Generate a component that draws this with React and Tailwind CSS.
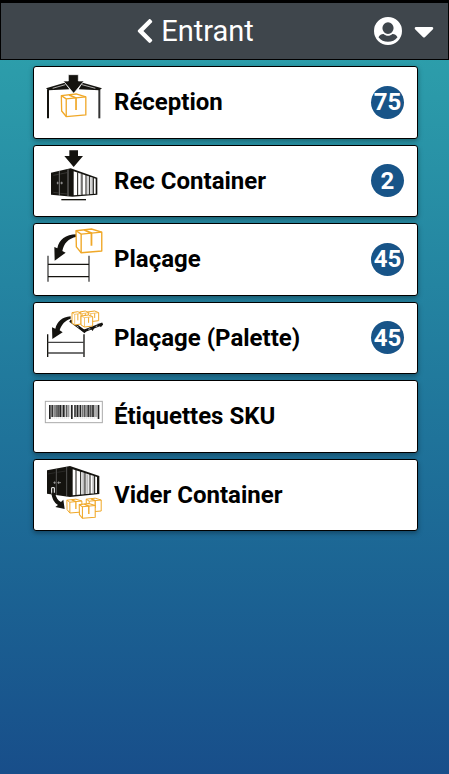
import React from "react";
import { FaChevronLeft, FaCaretDown } from "react-icons/fa";

const INK = "#14130f";
const GOLD = "#f0a828";

function UserIcon() {
    return (
        <svg viewBox="0 0 28 28" className="size-7" fill="currentColor" aria-hidden="true">
            <path
                fillRule="evenodd"
                d="M14 0a14 14 0 1 0 0 28a14 14 0 1 0 0-28Z M14 5.2a5.6 5.9 0 1 1 0 11.8a5.6 5.9 0 1 1 0-11.8Z M4.5 20.2C5.8 17.8 7.8 16.8 9.6 17C12 19.4 16 19.4 18.4 17C20.2 16.8 22.2 17.8 23.5 20.2C21.2 23.4 17.8 24.8 14 24.8C10.2 24.8 6.8 23.4 4.5 20.2Z"
            />
        </svg>
    );
}

function Box({ x, y, size = 1, width = 4 }) {
    return (
        <g transform={`translate(${x} ${y}) scale(${size})`} fill="#fff" stroke={GOLD} strokeWidth={width} strokeLinejoin="round">
            <path d="M1 6 L46 1 L76 10 L76 65 L16 70 L2 53 Z" />
            <path d="M1 6 L16 16 L76 10 M16 16 V70" fill="none" />
            <path d="M25 4 L46 13 V50" fill="none" strokeWidth={width * 1.3} />
        </g>
    );
}

// upright carton used for the small piles
function Carton({ x, y, w, h }) {
    return (
        <g transform={`translate(${x} ${y})`} fill="#fff" stroke={GOLD} strokeWidth="3" strokeLinejoin="round">
            <path d={`M0 3 L${w * 0.65} 0 L${w} 5 V${h - 3} L${w * 0.3} ${h} L0 ${h - 6} Z`} />
            <path d={`M0 3 L${w * 0.3} 8 L${w} 5 M${w * 0.3} 8 V${h}`} fill="none" strokeWidth="2" />
            <path d={`M${w * 0.65} 7 V${h * 0.65}`} fill="none" />
        </g>
    );
}

function ReceptionIcon() {
    return (
        <svg viewBox="36 15 192 210" className="h-[70px] w-16 shrink-0" aria-hidden="true">
            <path d="M54 169 V82" stroke={INK} strokeWidth="6" />
            <path d="M208 169 V82" stroke="#333" strokeWidth="6" />
            <path d="M48 79 L104 62 L118 82 L56 85 Z M216 79 L158 62 L146 82 L208 85 Z" fill={INK} />
            <path d="M68 79 L106 68 M196 79 L156 68" stroke="#fff" strokeWidth="2" />
            <Box x={93} y={95} size={0.98} />
            <path d="M115 38 H145 V57 H162 L131 94 L100 57 H115 Z" fill={INK} stroke="#fff" strokeWidth="2" />
        </svg>
    );
}

function Container() {
    return (
        <g>
            <path d="M63 91 L122 78 L202 106 V157 L127 163 L63 157 Z" fill={INK} />
            <path d="M131 87 L197 109 V154 L131 159 Z" fill="#fff" />
            <path d="M151 94 L155 95 V157 H151 Z M172 101 L176 102 V156 H172 Z M184 105 L189 107 V155 H184 Z" fill="#bbb" />
            <path d="M143 90 V159 M156 94 V158 M168 98 V157 M179 101 V157 M190 105 V156" stroke={INK} strokeWidth="3" />
            <path d="M88 86 V160 M114 81 V162" stroke="#aaa" strokeWidth="2" />
            <path d="M70 99 L86 96 M91 95 L111 91 M70 150 L86 152 M91 153 L111 155" stroke="#777" strokeWidth="1" />
            <path d="M80 122 H86 M91 122 H99 M83 118 V126 M95 118 V126" stroke="#bbb" strokeWidth="2" />
        </g>
    );
}

function RecContainerIcon() {
    return (
        <svg viewBox="36 11 192 210" className="h-[70px] w-16 shrink-0" aria-hidden="true">
            <path d="M118 24 H144 V41 H159 L131 74 L103 41 H118 Z" fill={INK} />
            <Container />
            <path d="M94 172 H168" stroke={INK} strokeWidth="4" />
        </svg>
    );
}

function PlacageIcon() {
    return (
        <svg viewBox="36 12 192 210" className="h-[70px] w-16 shrink-0" aria-hidden="true">
            <path d="M54 107 V185 M177 107 V185" stroke="#444" strokeWidth="4" />
            <path d="M54 133 H177 M54 170 H177" stroke={INK} strokeWidth="4" />
            <path d="M140 43 C106 44 88 58 82 85 L73 81 L74 122 L107 98 L97 93 C102 69 114 56 140 50 Z" fill={INK} />
            <Box x={137} y={26} size={1.03} width={4} />
        </svg>
    );
}

function PaletteIcon() {
    return (
        <svg viewBox="36 14 192 210" className="h-[70px] w-16 shrink-0" aria-hidden="true">
            <path d="M53 108 V176 M162 108 V176" stroke={INK} strokeWidth="4" />
            <path d="M53 132 H162 M53 164 H162" stroke="#444" strokeWidth="4" />
            <path d="M122 54 C96 56 82 70 76 91 L66 87 L67 122 L98 102 L89 96 C94 79 105 66 122 61 Z" fill={INK} />
            <path d="M120 67 L162 98 L218 76" fill="none" stroke={INK} strokeWidth="8" />
            <path d="M152 94 H172 L164 105 Z M178 87 H194 L188 98 Z M202 76 H219 L213 87 Z" fill={INK} />
            <path d="M127 73 L133 77 M140 83 L146 87 M175 93 L181 91 M197 85 L202 83" stroke="#fff" strokeWidth="2" />
            <Carton x={172} y={38} w={34} h={32} />
            <Carton x={149} y={38} w={26} h={34} />
            <Carton x={126} y={40} w={27} h={40} />
            <Carton x={153} y={50} w={35} h={36} />
        </svg>
    );
}

const bars = [
    [57, 5, "#222"], [63, 3, "#777"], [66, 4, "#333"], [71, 7, "#888"], [79, 4, "#222"],
    [84, 3, "#555"], [88, 5, "#222"], [94, 3, "#666"], [98, 6, "#222"], [107, 5, "#555"],
    [112, 5, "#999"], [118, 3, "#bbb"], [123, 5, "#222"], [132, 7, "#555"], [140, 4, "#222"],
    [145, 4, "#555"], [150, 4, "#222"], [156, 5, "#777"], [162, 5, "#555"], [167, 4, "#999"],
    [172, 5, "#333"], [178, 7, "#555"], [186, 7, "#444"], [194, 3, "#888"], [198, 4, "#aaa"], [203, 5, "#222"],
];

function BarcodeIcon() {
    return (
        <svg viewBox="36 15 192 210" className="h-[70px] w-16 shrink-0" aria-hidden="true">
            <rect x="46" y="76" width="171" height="64" fill="#fff" stroke="#aaa" strokeWidth="3" />
            {bars.map(([x, w, color]) => (
                <rect key={x} x={x} y="87" width={w} height={x === 57 || x === 123 || x === 203 ? 42 : 36} fill={color} />
            ))}
            <path d="M65 126 H119 M131 126 H200" stroke="#ccc" strokeWidth="2" strokeDasharray="4 2" />
        </svg>
    );
}

function ViderIcon() {
    return (
        <svg viewBox="36 14 192 210" className="h-[70px] w-16 shrink-0" aria-hidden="true">
            <path d="M51 45 L120 32 L208 62 V116 L120 125 L51 115 Z" fill={INK} />
            <path d="M128 42 L201 65 V113 L128 120 Z" fill="#fff" />
            <path d="M157 52 L164 54 V116 H157 Z M169 56 L175 58 V115 H169 Z M187 61 L194 63 V114 H187 Z" fill="#bbb" />
            <path d="M138 43 V121 M152 47 V120 M165 51 V119 M180 56 V117 M194 60 V116" stroke={INK} strokeWidth="3" />
            <path d="M79 40 V119 M110 35 V123" stroke="#777" strokeWidth="2" />
            <path d="M54 56 L76 52 M82 51 L107 47" stroke="#555" strokeWidth="1" />
            <path d="M70 82 H77 M82 82 H93 M74 78 V86 M86 78 V86" stroke="#bbb" strokeWidth="2" />
            <path d="M65 116 V97 H73 V116" fill={INK} stroke="#fff" strokeWidth="3" />
            <path d="M64 112 L75 112 C78 127 84 135 93 140 L100 133 L104 161 L76 155 L84 149 C72 141 66 130 64 112 Z" fill={INK} />
            <Box x={110} y={131} size={0.6} width={5} />
            <Box x={168} y={128} size={0.6} width={5} />
            <Box x={147} y={144} size={0.64} width={5} />
        </svg>
    );
}

const menu = [
    { label: "Réception", Icon: ReceptionIcon, count: 75 },
    { label: "Rec Container", Icon: RecContainerIcon, count: 2 },
    { label: "Plaçage", Icon: PlacageIcon, count: 45 },
    { label: "Plaçage (Palette)", Icon: PaletteIcon, count: 45 },
    { label: "Étiquettes SKU", Icon: BarcodeIcon },
    { label: "Vider Container", Icon: ViderIcon },
];

export default function App() {
    return (
        <div className="min-h-screen bg-linear-to-b from-[#2fa4ad] to-[#184e8a] font-[Roboto,sans-serif]">
            <header className="relative flex h-[60px] items-center justify-center border border-t-3 border-black bg-[#3f464c] text-white">
                <button type="button" className="flex items-center gap-[2px] pr-16 text-[29px] leading-9">
                    <FaChevronLeft size={28} />
                    Entrant
                </button>
                <button type="button" aria-label="Compte" className="absolute right-2 flex items-center gap-[6px]">
                    <UserIcon />
                    <FaCaretDown size={32} />
                </button>
            </header>

            <main className="pt-[6px] pr-[31px] pl-[33px]">
                <nav className="grid h-[465px] auto-rows-fr gap-[6px]">
                    {menu.map(({ label, Icon, count }) => (
                        <button
                            key={label}
                            type="button"
                            className="flex items-center gap-2 rounded-[3px] border border-black bg-white pr-[13px] pl-2 text-left text-2xl font-bold text-black shadow-[0_2px_5px_rgba(0,0,0,0.35)]"
                        >
                            <Icon />
                            <span className="flex-1">{label}</span>
                            {count && (
                                <span className="flex size-[33px] items-center justify-center rounded-full bg-[#185488] text-white">
                                    {count}
                                </span>
                            )}
                        </button>
                    ))}
                </nav>
            </main>
        </div>
    );
}
